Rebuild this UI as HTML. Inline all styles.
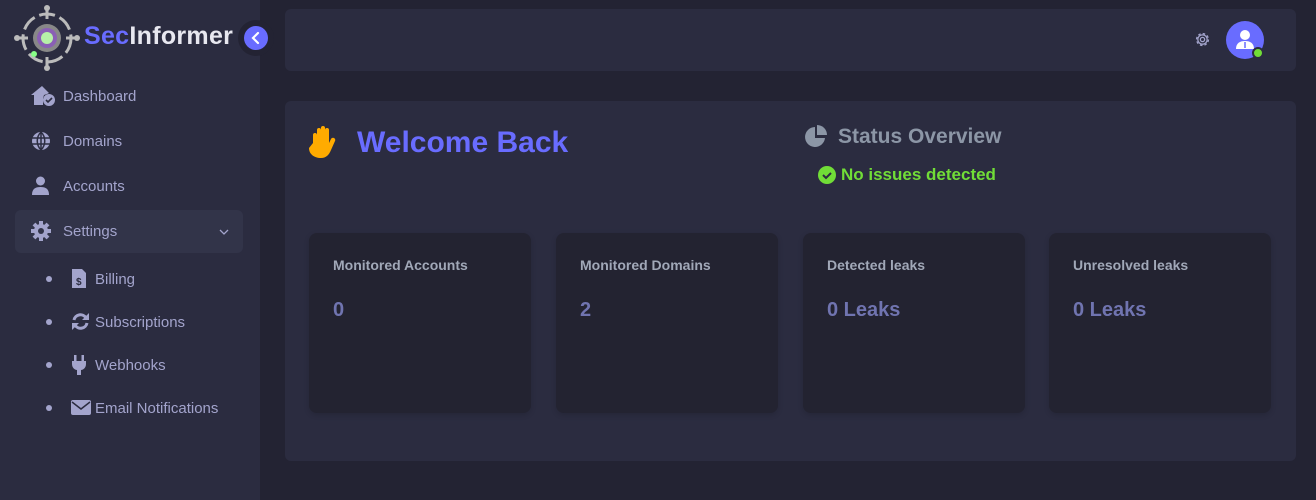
<!DOCTYPE html>
<html><head><style>
*{margin:0;padding:0;box-sizing:border-box}
body{width:1316px;height:500px;background:#232333;font-family:"Liberation Sans",sans-serif;position:relative;overflow:hidden}
.sb{position:absolute;left:0;top:0;width:260px;height:500px;background:#2b2c40}
.logo{position:absolute;left:84px;top:22px;font-size:25px;font-weight:bold;color:#e8e8f0;letter-spacing:0.3px}
.logo span{color:#696cff}
.tog{position:absolute;left:238px;top:20px;width:36px;height:36px;border-radius:50%;background:#232333}
.tog div{position:absolute;left:6px;top:6px;width:24px;height:24px;border-radius:50%;background:#696cff}
.nav{position:absolute;left:63px;font-size:15px;color:#a3a4cc}
.ic{position:absolute;fill:#a3a4cc}
.set{position:absolute;left:15px;top:210px;width:228px;height:43px;background:#323449;border-radius:6px}
.dot{position:absolute;left:46px;width:6px;height:6px;border-radius:50%;background:#a3a4cc}
.top{position:absolute;left:285px;top:9px;width:1011px;height:62px;background:#2b2c40;border-radius:6px}
.main{position:absolute;left:285px;top:101px;width:1011px;height:360px;background:#2b2c40;border-radius:6px}
.wb{position:absolute;left:72px;top:25px;font-size:30px;font-weight:bold;color:#696cff}
.so{position:absolute;left:553px;top:24px;font-size:21px;font-weight:bold;color:#8c96a6}
.ok{position:absolute;top:64px;font-size:17px;font-weight:bold;color:#71dd37}
.st{position:absolute;top:132px;width:222px;height:180px;background:#232331;border-radius:8px;box-shadow:0 2px 6px rgba(0,0,0,.15)}
.st .t{position:absolute;left:24px;top:24px;font-size:14px;font-weight:bold;color:#a1a8b8}
.st .v{position:absolute;left:24px;top:66px;font-size:20px;font-weight:bold;color:#7074b0}
</style></head><body>
<div class="sb">
<svg style="position:absolute;left:14px;top:5px" width="66" height="66" viewBox="0 0 66 66">
<circle cx="33" cy="33" r="24" fill="none" stroke="#bbb" stroke-width="3" stroke-dasharray="16 5"/>
<line x1="33" y1="2" x2="33" y2="14" stroke="#bbb" stroke-width="3"/><circle cx="33" cy="3" r="3" fill="#bbb"/>
<line x1="33" y1="52" x2="33" y2="64" stroke="#bbb" stroke-width="3"/><circle cx="33" cy="63" r="3" fill="#bbb"/>
<line x1="3" y1="33" x2="14" y2="33" stroke="#bbb" stroke-width="3"/><circle cx="3" cy="33" r="3" fill="#bbb"/>
<line x1="52" y1="33" x2="64" y2="33" stroke="#bbb" stroke-width="3"/><circle cx="63" cy="33" r="3" fill="#bbb"/>
<circle cx="33" cy="33" r="14" fill="#888"/><circle cx="33" cy="33" r="10" fill="#8a5fb5"/><circle cx="33" cy="33" r="6" fill="#b6f0a8"/>
<circle cx="20" cy="49" r="3" fill="#8f8"/></svg>
<div class="logo"><span>Sec</span>Informer</div>
<div class="tog"><div><svg width="24" height="24" viewBox="0 0 24 24"><path d="M14 7l-5 5 5 5" stroke="#fff" stroke-width="2.2" fill="none" stroke-linecap="round"/></svg></div></div>
<svg class="ic" style="left:31px;top:85px" width="26" height="22" viewBox="0 0 26 22"><path d="M11 1L0 10h3v10h9v-7l1-3 3-1 2-1z"/><circle cx="18" cy="15" r="6"/><path d="M15 15l2 2 4-4" stroke="#2b2c40" stroke-width="1.6" fill="none"/></svg>
<div class="nav" style="top:88px">Dashboard</div>
<svg class="ic" style="left:31px;top:131px" width="20" height="20" viewBox="0 0 20 20"><circle cx="10" cy="10" r="9"/><path d="M1 7h18M1 13h18M10 1v18M10 1c-5 5-5 13 0 18M10 1c5 5 5 13 0 18" stroke="#2b2c40" stroke-width="1.5" fill="none"/></svg>
<div class="nav" style="top:133px">Domains</div>
<svg class="ic" style="left:32px;top:176px" width="17" height="19" viewBox="0 0 17 19"><circle cx="8.5" cy="5" r="4.5"/><path d="M0 19c0-6 3-8 8.5-8s8.5 2 8.5 8z"/></svg>
<div class="nav" style="top:178px">Accounts</div>
<div class="set"></div>
<svg class="ic" style="left:31px;top:221px" width="20" height="20" viewBox="0 0 20 20"><circle cx="10" cy="10" r="7"/><g stroke="#a3a4cc" stroke-width="4"><line x1="10" y1="0" x2="10" y2="20"/><line x1="0" y1="10" x2="20" y2="10"/><line x1="3" y1="3" x2="17" y2="17"/><line x1="17" y1="3" x2="3" y2="17"/></g><circle cx="10" cy="10" r="3" fill="#323449"/></svg>
<div class="nav" style="top:223px">Settings</div>
<svg style="position:absolute;left:219px;top:228px" width="10" height="8"><path d="M1 2l4 4 4-4" stroke="#a3a4cc" stroke-width="1.3" fill="none"/></svg>
<div class="dot" style="top:276px"></div><div class="dot" style="top:319px"></div><div class="dot" style="top:362px"></div><div class="dot" style="top:405px"></div>
<svg class="ic" style="left:71px;top:269px" width="16" height="20" viewBox="0 0 16 20"><path d="M1 0h10l4 4v15H1z"/><text x="5" y="16" font-size="10" font-weight="bold" fill="#2b2c40" font-family="Liberation Sans">$</text></svg>
<div class="nav" style="left:95px;top:271px">Billing</div>
<svg style="position:absolute;left:71px;top:312px" width="19" height="19" viewBox="0 0 19 19"><path d="M3 8a6.5 6.5 0 0 1 12-2M16 11a6.5 6.5 0 0 1-12 2" stroke="#a3a4cc" stroke-width="3" fill="none"/><path d="M18 1v7h-7zM1 18v-7h7z" fill="#a3a4cc"/></svg>
<div class="nav" style="left:95px;top:314px">Subscriptions</div>
<svg class="ic" style="left:71px;top:355px" width="16" height="20" viewBox="0 0 16 20"><rect x="3" y="0" width="2.5" height="6"/><rect x="10.5" y="0" width="2.5" height="6"/><path d="M1 6h14v3c0 4-3 6-5 6v5H6v-5c-2 0-5-2-5-6z"/></svg>
<div class="nav" style="left:95px;top:357px">Webhooks</div>
<svg class="ic" style="left:71px;top:400px" width="20" height="15" viewBox="0 0 20 15"><rect width="20" height="15" rx="2"/><path d="M1 2l9 7 9-7" stroke="#2b2c40" stroke-width="1.5" fill="none"/></svg>
<div class="nav" style="left:95px;top:400px">Email Notifications</div>
</div>
<div class="top">
<svg style="position:absolute;left:909px;top:22px" width="17" height="17" viewBox="0 0 20 20"><circle cx="10" cy="10" r="7" fill="none" stroke="#a3a4cc" stroke-width="1.5" stroke-dasharray="3 2.5"/><circle cx="10" cy="10" r="5.5" fill="none" stroke="#a3a4cc" stroke-width="1.5"/><circle cx="10" cy="10" r="2.5" fill="none" stroke="#a3a4cc" stroke-width="1.5"/></svg>
<div style="position:absolute;left:941px;top:12px;width:38px;height:38px;border-radius:50%;background:#696cff">
<svg width="38" height="38" viewBox="0 0 38 38"><circle cx="19" cy="14" r="5" fill="#fff"/><path d="M10 28c0-6 4-8 9-8s9 2 9 8z" fill="#fff"/><path d="M19 21v6" stroke="#696cff" stroke-width="1.5"/></svg>
<div style="position:absolute;left:26px;top:26px;width:12px;height:12px;border-radius:50%;background:#71dd37;border:2px solid #2b2c40"></div></div>
</div>
<div class="main">
<svg style="position:absolute;left:22px;top:24px" width="34" height="34" viewBox="0 0 34 34"><path d="M6 18V10a2 2 0 0 1 4 0v7V5a2 2 0 0 1 4 0v11V3a2 2 0 0 1 4 0v13V5a2 2 0 0 1 4 0v13l2-4a2 2 0 0 1 4 2l-4 9c-2 5-5 8-10 8-7 0-12-4-12-10z" fill="#ffab00"/></svg>
<div class="wb">Welcome Back</div>
<svg style="position:absolute;left:519px;top:24px" width="24" height="24" viewBox="0 0 24 24"><path d="M11 2a10 10 0 1 0 10 11H11z" fill="#8c96a6"/><path d="M13 0a10 10 0 0 1 10 10H13z" fill="#8c96a6"/></svg>
<div class="so">Status Overview</div>
<svg style="position:absolute;left:533px;top:65px" width="18" height="18" viewBox="0 0 18 18"><circle cx="9" cy="9" r="9" fill="#71dd37"/><path d="M5 9l3 3 5-5" stroke="#2b2c40" stroke-width="2" fill="none"/></svg>
<div class="ok" style="left:556px">No issues detected</div>
<div class="st" style="left:24px"><div class="t">Monitored Accounts</div><div class="v">0</div></div>
<div class="st" style="left:271px"><div class="t">Monitored Domains</div><div class="v">2</div></div>
<div class="st" style="left:518px"><div class="t">Detected leaks</div><div class="v">0 Leaks</div></div>
<div class="st" style="left:764px"><div class="t">Unresolved leaks</div><div class="v">0 Leaks</div></div>
</div>
</body></html>
